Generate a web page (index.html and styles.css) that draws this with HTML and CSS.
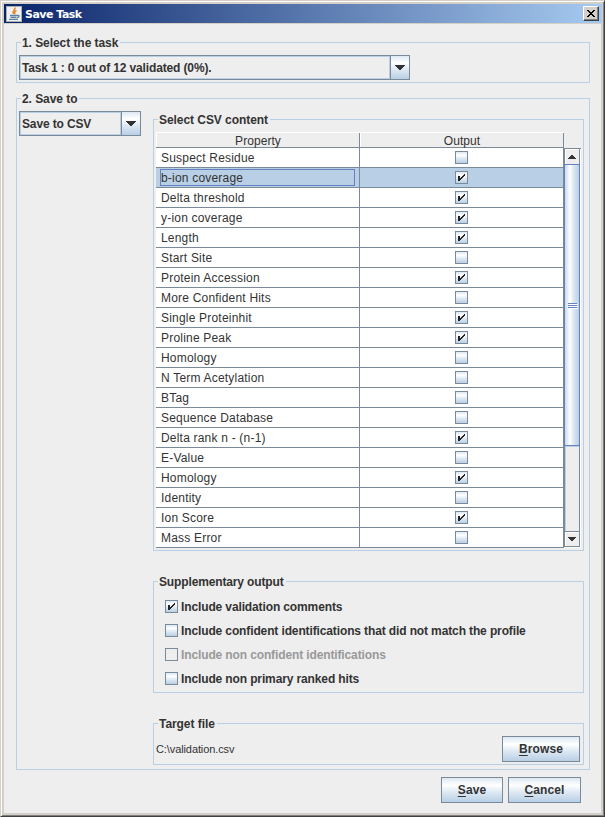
FILE: index.html
```html
<!DOCTYPE html>
<html lang="en">
<head>
<meta charset="utf-8">
<title>Save Task</title>
<link rel="stylesheet" href="styles.css">
</head>
<body>
<div class="window">
  <header class="titlebar">
    <svg class="java" viewBox="0 0 16 16" width="16" height="16">
      <rect width="16" height="16" fill="#a9b0b4"/><rect x="1" y="1" width="14" height="14" fill="#f0f1f0"/>
      <path d="M9 1.500C10 4 5.500 4.500 7.500 8M10.500 4.500C8 5.500 8.500 6.500 9 8.200" fill="none" stroke="#e8842c" stroke-width="1.500"/>
      <path d="M4 9.500h7.500M4.500 11.300h6M3 13.300h9M11.500 9.500c2.500-.8 2 2-.5 2.200" fill="none" stroke="#5c82a0" stroke-width="1.300"/>
    </svg>
    <h1>Save Task</h1>
    <button class="close" aria-label="Close"><svg viewBox="0 0 8 7" width="8" height="7" shape-rendering="crispEdges"><path d="M0 0h2v1h1v1h2V1h1V0h2v1H7v1H6v1H5v1h1v1h1v1h1v1H6V6H5V5H3v1H2v1H0V6h1V5h1V4h1V3H2V2H1V1H0z"/></svg></button>
  </header>
  <main>
    <section class="group task">
      <h2>1. Select the task</h2>
      <div class="combo wide"><span>Task 1 : 0 out of 12 validated (0%).</span><i><svg viewBox="0 0 10 5" width="10" height="5" shape-rendering="crispEdges"><path d="M0 0h10v1H9v1H8v1H7v1H6v1H4V4H3V3H2V2H1V1H0z"/></svg></i></div>
    </section>
    <section class="group saveto">
      <h2>2. Save to</h2>
      <div class="columns">
        <div class="combo"><span>Save to CSV</span><i><svg viewBox="0 0 10 5" width="10" height="5" shape-rendering="crispEdges"><path d="M0 0h10v1H9v1H8v1H7v1H6v1H4V4H3V3H2V2H1V1H0z"/></svg></i></div>
        <div class="panels">
          <section class="group content">
            <h2>Select CSV content</h2>
            <div class="tablebox">
              <div class="table">
                <div class="thead"><span>Property</span><span>Output</span></div>
                <div class="tbody" id="rows"></div>
              </div>
              <div class="scroll">
                <b class="arrow"><svg viewBox="0 0 8 4" width="8" height="4" shape-rendering="crispEdges"><path d="M3 0h2v1h1v1h1v1h1v1H0V3h1V2h1V1h1z"/></svg></b>
                <div class="thumb"><em></em><em></em><em></em></div>
                <div class="track"></div>
                <b class="arrow down"><svg viewBox="0 0 8 4" width="8" height="4" shape-rendering="crispEdges"><path d="M0 0h8v1H7v1H6v1H5v1H3V3H2V2H1V1H0z"/></svg></b>
              </div>
            </div>
          </section>
          <section class="group extra">
            <h2>Supplementary output</h2>
            <label><span class="box on"></span><span>Include validation comments</span></label>
            <label><span class="box"></span><span>Include confident identifications that did not match the profile</span></label>
            <label class="off"><span class="box"></span><span>Include non confident identifications</span></label>
            <label><span class="box"></span><span>Include non primary ranked hits</span></label>
          </section>
          <section class="group target">
            <h2>Target file</h2>
            <div class="file"><span>C:\validation.csv</span><button class="btn browse"><u>B</u>rowse</button></div>
          </section>
        </div>
      </div>
    </section>
    <footer><button class="btn save"><u>S</u>ave</button><button class="btn cancel"><u>C</u>ancel</button></footer>
  </main>
</div>
<script src="rows.js"></script>
</body>
</html>
```
FILE: styles.css
```css
* { box-sizing: border-box; }
body { margin: 0; font: bold 12px/15px "Liberation Sans", Arial, sans-serif; color: #333; }
button { font: inherit; color: inherit; padding: 0; }
svg { display: block; }
.window { width: 605px; height: 817px; background: #eee; border: 1px solid; border-color: #d4d0c8 #404040 #404040 #d4d0c8; box-shadow: inset 1px 1px #fff, inset -1px -1px #808080, inset 3px 3px #d4d0c8, inset -3px -3px #d4d0c8; padding: 3px 2px 2px 3px; overflow: hidden; }
.titlebar { height: 19px; display: flex; align-items: center; padding: 0 3px 0 2px; background: linear-gradient(90deg, #0a246a, #a6caf0); box-shadow: 0 1px #d4d0c8; }
h1 { margin: 1px auto 0 3px; font: bold 11px/15px "DejaVu Sans", sans-serif; color: #fff; letter-spacing: -.5px; }
.close { width: 16px; height: 15px; background: #d4d0c8; border: 1px solid; border-color: #fff #404040 #404040 #fff; box-shadow: inset -1px -1px #808080; display: flex; padding: 3px 0 0 3px; }
main { padding: 19px 12px 0; }
.group { border: 1px solid #b8cfe5; }
h2 { font: inherit; margin: -8px 0 0 4px; padding: 1px 2px 0 1px; width: fit-content; background: #eee; white-space: nowrap; letter-spacing: -.06px; height: 15px; }
.task { height: 41px; }
.combo { width: 122px; height: 25px; border: 1px solid #7a8a99; display: flex; flex: none; white-space: nowrap; letter-spacing: -.14px; }
.combo span { flex: 1; border: 1px solid #b8cfe5; padding: 4px 0 0 1px; }
.combo i { width: 19px; border-left: 1px solid #7a8a99; background: linear-gradient(#dde8f3, #fff 30%, #dde8f3 60%, #b8cfe5); display: flex; align-items: center; justify-content: center; }
.combo svg, .arrow svg { fill: #333; }
.wide { width: 391px; margin: 5px 0 0 2px; }
.saveto { height: 672px; margin-top: 15px; }
.columns { display: flex; align-items: flex-start; gap: 12px; padding: 5px 4px 0 2px; }
.panels { width: 431px; }
.content { height: 432px; margin-top: 8px; }
.tablebox { display: flex; margin: 5px 0 0 2px; height: 416px; }
.table { width: 408px; }
.thead, .row { display: grid; grid-template-columns: 204px 204px; border-bottom: 1px solid #7a8a99; font-weight: normal; }
.thead { height: 16px; border-top: 1px solid #fff; text-align: center; letter-spacing: .05px; line-height: 16px; }
.thead span, .row > span { border-right: 1px solid #7a8a99; }
.thead span { border-left: 1px solid #fff; height: 14px; }
.row { height: 20px; background: #fff; letter-spacing: .2px; }
.row > span { height: 19px; padding: 2px 0 0 5px; line-height: 16px; white-space: nowrap; }
.row > span + span { padding: 3px 0 0 95px; }
.row.sel { background: #b8cfe5; }
.row.sel > span:first-child { padding: 1px 4px 0 4px; }
.focus { display: block; height: 17px; border: 1px solid #6382bf; line-height: 16px; }
.box { display: block; flex: none; width: 13px; height: 13px; border: 1px solid #7a8a99; background: linear-gradient(#dde8f3, #fff 30%, #dde8f3 60%, #b8cfe5); }
.box svg { fill: #222; margin: 2px 0 0 2px; }
.scroll { width: 17px; margin-top: 16px; height: 400px; display: flex; flex-direction: column; border-top: 1px solid #7a8a99; box-shadow: inset -1px -1px #fff; padding-right: 1px; }
.arrow { height: 15px; border: solid #7a8a99; border-width: 0 1px; box-shadow: inset 1px 1px #fff; display: flex; align-items: center; justify-content: center; }
.down { border-top-width: 1px; border-bottom-width: 1px; height: 16px; margin-bottom: 1px; }
.thumb { flex: none; height: 282px; border: 1px solid #6382bf; background: linear-gradient(90deg, #c8dbee, #fff 35%, #dde8f3 60%, #b8cfe5); display: flex; flex-direction: column; align-items: center; padding-top: 138px; gap: 1px; }
.thumb em { width: 9px; height: 1px; background: #6382bf; box-shadow: 1px 1px #fff; }
.track { flex: 1; border: solid #7a8a99; border-width: 0 1px; box-shadow: inset 1px 1px #b8cfe5; }
.extra { height: 112px; margin-top: 30px; }
.extra label { display: flex; height: 24px; margin-left: 11px; gap: 3px; white-space: nowrap; line-height: 14px; letter-spacing: -.125px; }
.extra h2 { margin-bottom: 11px; letter-spacing: -.14px; }
.off { color: #999; }
.off .box { background: none; }
.target { height: 42px; margin-top: 30px; }
.file { display: flex; justify-content: space-between; padding: 5px 3px 0 2px; font-weight: normal; font-size: 11px; line-height: 26px; letter-spacing: -.1px; }
.btn { display: block; height: 26px; border: 1px solid #7a8a99; background: linear-gradient(#dde8f3, #fff 30%, #dde8f3 60%, #b8cfe5); font: bold 12px/25px "Liberation Sans", Arial, sans-serif; letter-spacing: .1px; }
.btn u { text-underline-offset: 2px; }
.browse { width: 78px; }
.save { width: 62px; }
.cancel { width: 73px; }
footer { display: flex; justify-content: flex-end; gap: 5px; padding: 7px 9px 0 0; }
```
FILE: rows.js
```js
const tick = '<svg viewBox="0 0 7 7" width="7" height="7" shape-rendering="crispEdges"><path d="M6 0h1v2H6v1H5v1H4v1H3v1H2v1H0V2h2v2h1V3h1V2h1V1h1z"/></svg>';
const names = ['Suspect Residue', 'b-ion coverage', 'Delta threshold', 'y-ion coverage', 'Length', 'Start Site', 'Protein Accession', 'More Confident Hits', 'Single Proteinhit', 'Proline Peak', 'Homology', 'N Term Acetylation', 'BTag', 'Sequence Database', 'Delta rank n - (n-1)', 'E-Value', 'Homology', 'Identity', 'Ion Score', 'Mass Error'];
const checked = [1, 2, 3, 4, 6, 8, 9, 14, 16, 18];
document.getElementById('rows').innerHTML = names.map((name, i) =>
  `<div class="row${i === 1 ? ' sel' : ''}"><span>${i === 1 ? `<span class="focus">${name}</span>` : name}</span><span><span class="box${checked.includes(i) ? ' on' : ''}"></span></span></div>`).join('');
document.querySelectorAll('.box.on').forEach(box => { box.innerHTML = tick; });
```
